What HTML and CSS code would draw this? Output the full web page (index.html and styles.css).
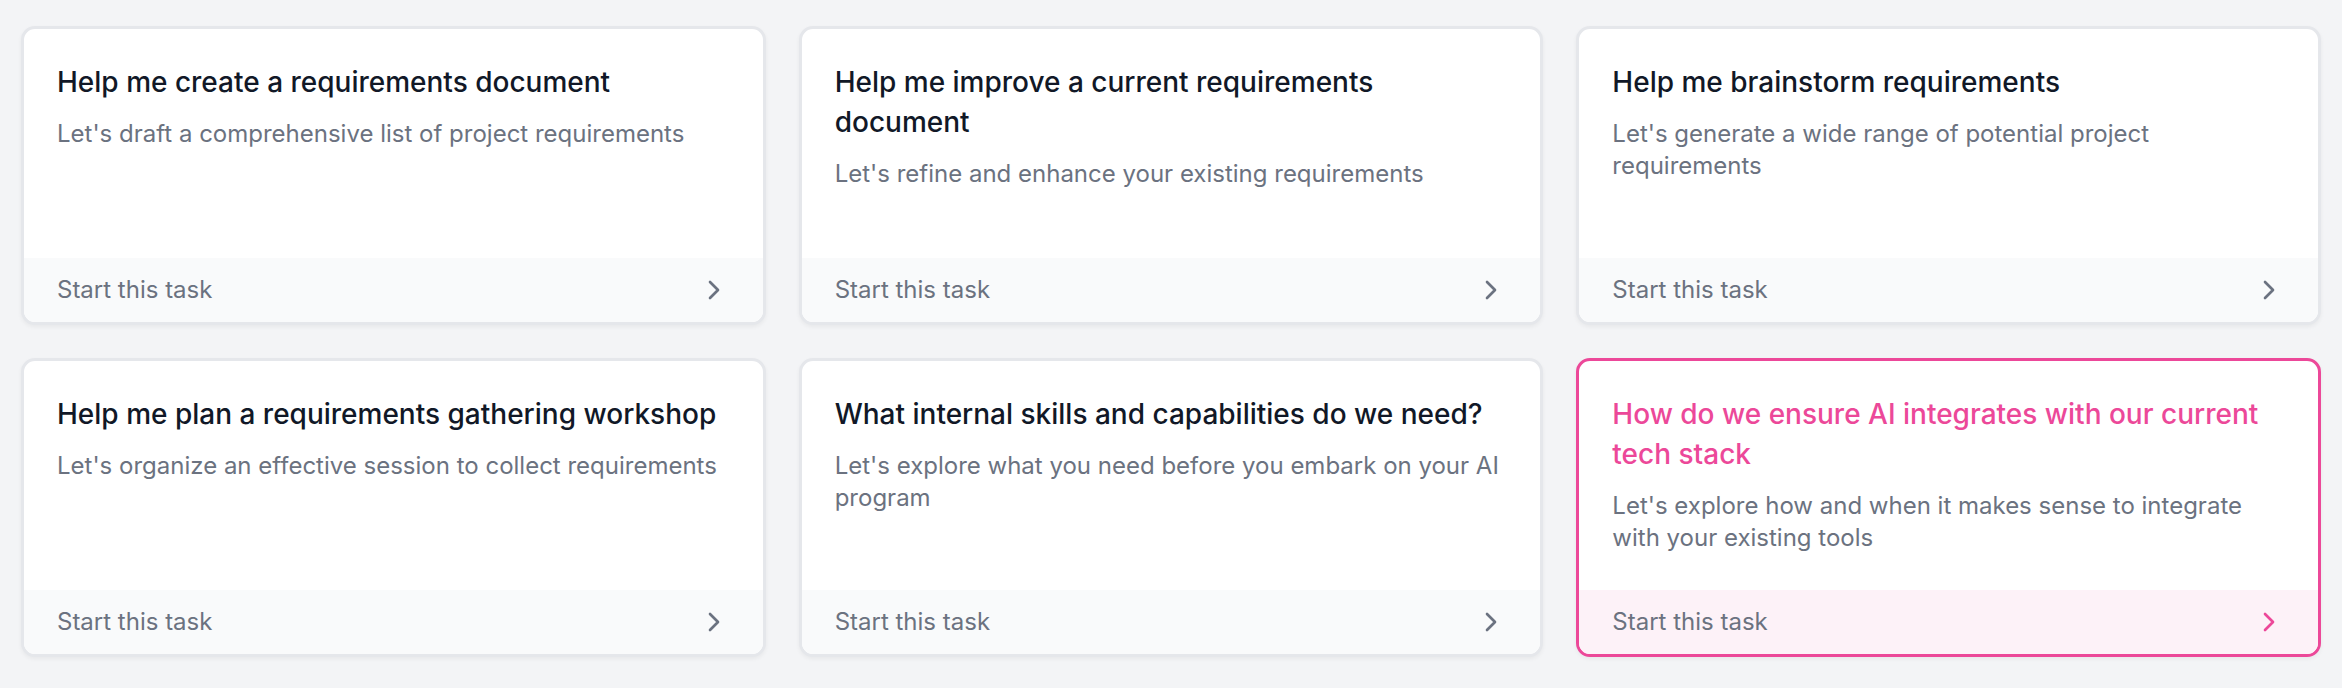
FILE: index.html
```html
<!DOCTYPE html>
<html lang="en">
<head>
<meta charset="utf-8">
<title>Tasks</title>
<link rel="stylesheet" href="styles.css">
</head>
<body>
<main class="grid">
  <a class="card">
    <div class="card-body">
      <h3 class="card-title">Help me create a requirements document</h3>
      <p class="card-desc">Let's draft a comprehensive list of project requirements</p>
    </div>
    <div class="card-foot"><span>Start this task</span>
      <svg class="chev" viewBox="0 0 24 24" fill="none" stroke="currentColor" stroke-width="2" stroke-linecap="round" stroke-linejoin="round"><path d="m9 18 6-6-6-6"/></svg>
    </div>
  </a>
  <a class="card">
    <div class="card-body">
      <h3 class="card-title">Help me improve a current requirements document</h3>
      <p class="card-desc">Let's refine and enhance your existing requirements</p>
    </div>
    <div class="card-foot"><span>Start this task</span>
      <svg class="chev" viewBox="0 0 24 24" fill="none" stroke="currentColor" stroke-width="2" stroke-linecap="round" stroke-linejoin="round"><path d="m9 18 6-6-6-6"/></svg>
    </div>
  </a>
  <a class="card">
    <div class="card-body">
      <h3 class="card-title">Help me brainstorm requirements</h3>
      <p class="card-desc">Let's generate a wide range of potential project requirements</p>
    </div>
    <div class="card-foot"><span>Start this task</span>
      <svg class="chev" viewBox="0 0 24 24" fill="none" stroke="currentColor" stroke-width="2" stroke-linecap="round" stroke-linejoin="round"><path d="m9 18 6-6-6-6"/></svg>
    </div>
  </a>
  <a class="card">
    <div class="card-body">
      <h3 class="card-title">Help me plan a requirements gathering workshop</h3>
      <p class="card-desc">Let's organize an effective session to collect requirements</p>
    </div>
    <div class="card-foot"><span>Start this task</span>
      <svg class="chev" viewBox="0 0 24 24" fill="none" stroke="currentColor" stroke-width="2" stroke-linecap="round" stroke-linejoin="round"><path d="m9 18 6-6-6-6"/></svg>
    </div>
  </a>
  <a class="card">
    <div class="card-body">
      <h3 class="card-title">What internal skills and capabilities do we need?</h3>
      <p class="card-desc">Let's explore what you need before you embark on your AI program</p>
    </div>
    <div class="card-foot"><span>Start this task</span>
      <svg class="chev" viewBox="0 0 24 24" fill="none" stroke="currentColor" stroke-width="2" stroke-linecap="round" stroke-linejoin="round"><path d="m9 18 6-6-6-6"/></svg>
    </div>
  </a>
  <a class="card card-active">
    <div class="card-body">
      <h3 class="card-title">How do we ensure AI integrates with our current tech stack</h3>
      <p class="card-desc">Let's explore how and when it makes sense to integrate with your existing tools</p>
    </div>
    <div class="card-foot"><span>Start this task</span>
      <svg class="chev" viewBox="0 0 24 24" fill="none" stroke="currentColor" stroke-width="2" stroke-linecap="round" stroke-linejoin="round"><path d="m9 18 6-6-6-6"/></svg>
    </div>
  </a>
</main>
</body>
</html>
```

FILE: styles.css
```css
html, body {
  margin: 0;
  padding: 0;
  background: #f3f4f6;
}
body {
  font-family: Inter, "Noto Sans", "Liberation Sans", sans-serif;
  -webkit-font-smoothing: antialiased;
}
.grid {
  display: grid;
  grid-template-columns: repeat(3, 1fr);
  gap: 33px;
  padding: 26px 21px 31px 21px;
}
.card {
  display: flex;
  flex-direction: column;
  min-height: 293px;
  background: #ffffff;
  border: 3px solid #e5e7eb;
  border-radius: 14px;
  overflow: hidden;
  box-shadow: 0 2px 4px rgba(0, 0, 0, 0.05);
  text-decoration: none;
  cursor: pointer;
}
.card-body {
  flex: 1;
  padding: 33px 33px 33px 33px;
}
.card-title {
  margin: 0;
  font-size: 28px;
  line-height: 40px;
  font-weight: 500;
  color: #111827;
}
.card-desc {
  margin: 16px 0 0 0;
  font-size: 24px;
  line-height: 32px;
  font-weight: 400;
  color: #6b7280;
}
.card-foot {
  display: flex;
  align-items: center;
  justify-content: space-between;
  height: 64px;
  box-sizing: border-box;
  padding: 0 33px;
  background: #f9fafb;
  font-size: 24px;
  line-height: 32px;
  color: #6b7280;
}
.chev {
  width: 32px;
  height: 32px;
  color: #6b7280;
}
.card-active {
  border-color: #ec4899;
}
.card-active .card-title {
  color: #ec4899;
}
.card-active .card-foot {
  background: #fdf2f8;
}
.card-active .chev {
  color: #ec4899;
}
```
